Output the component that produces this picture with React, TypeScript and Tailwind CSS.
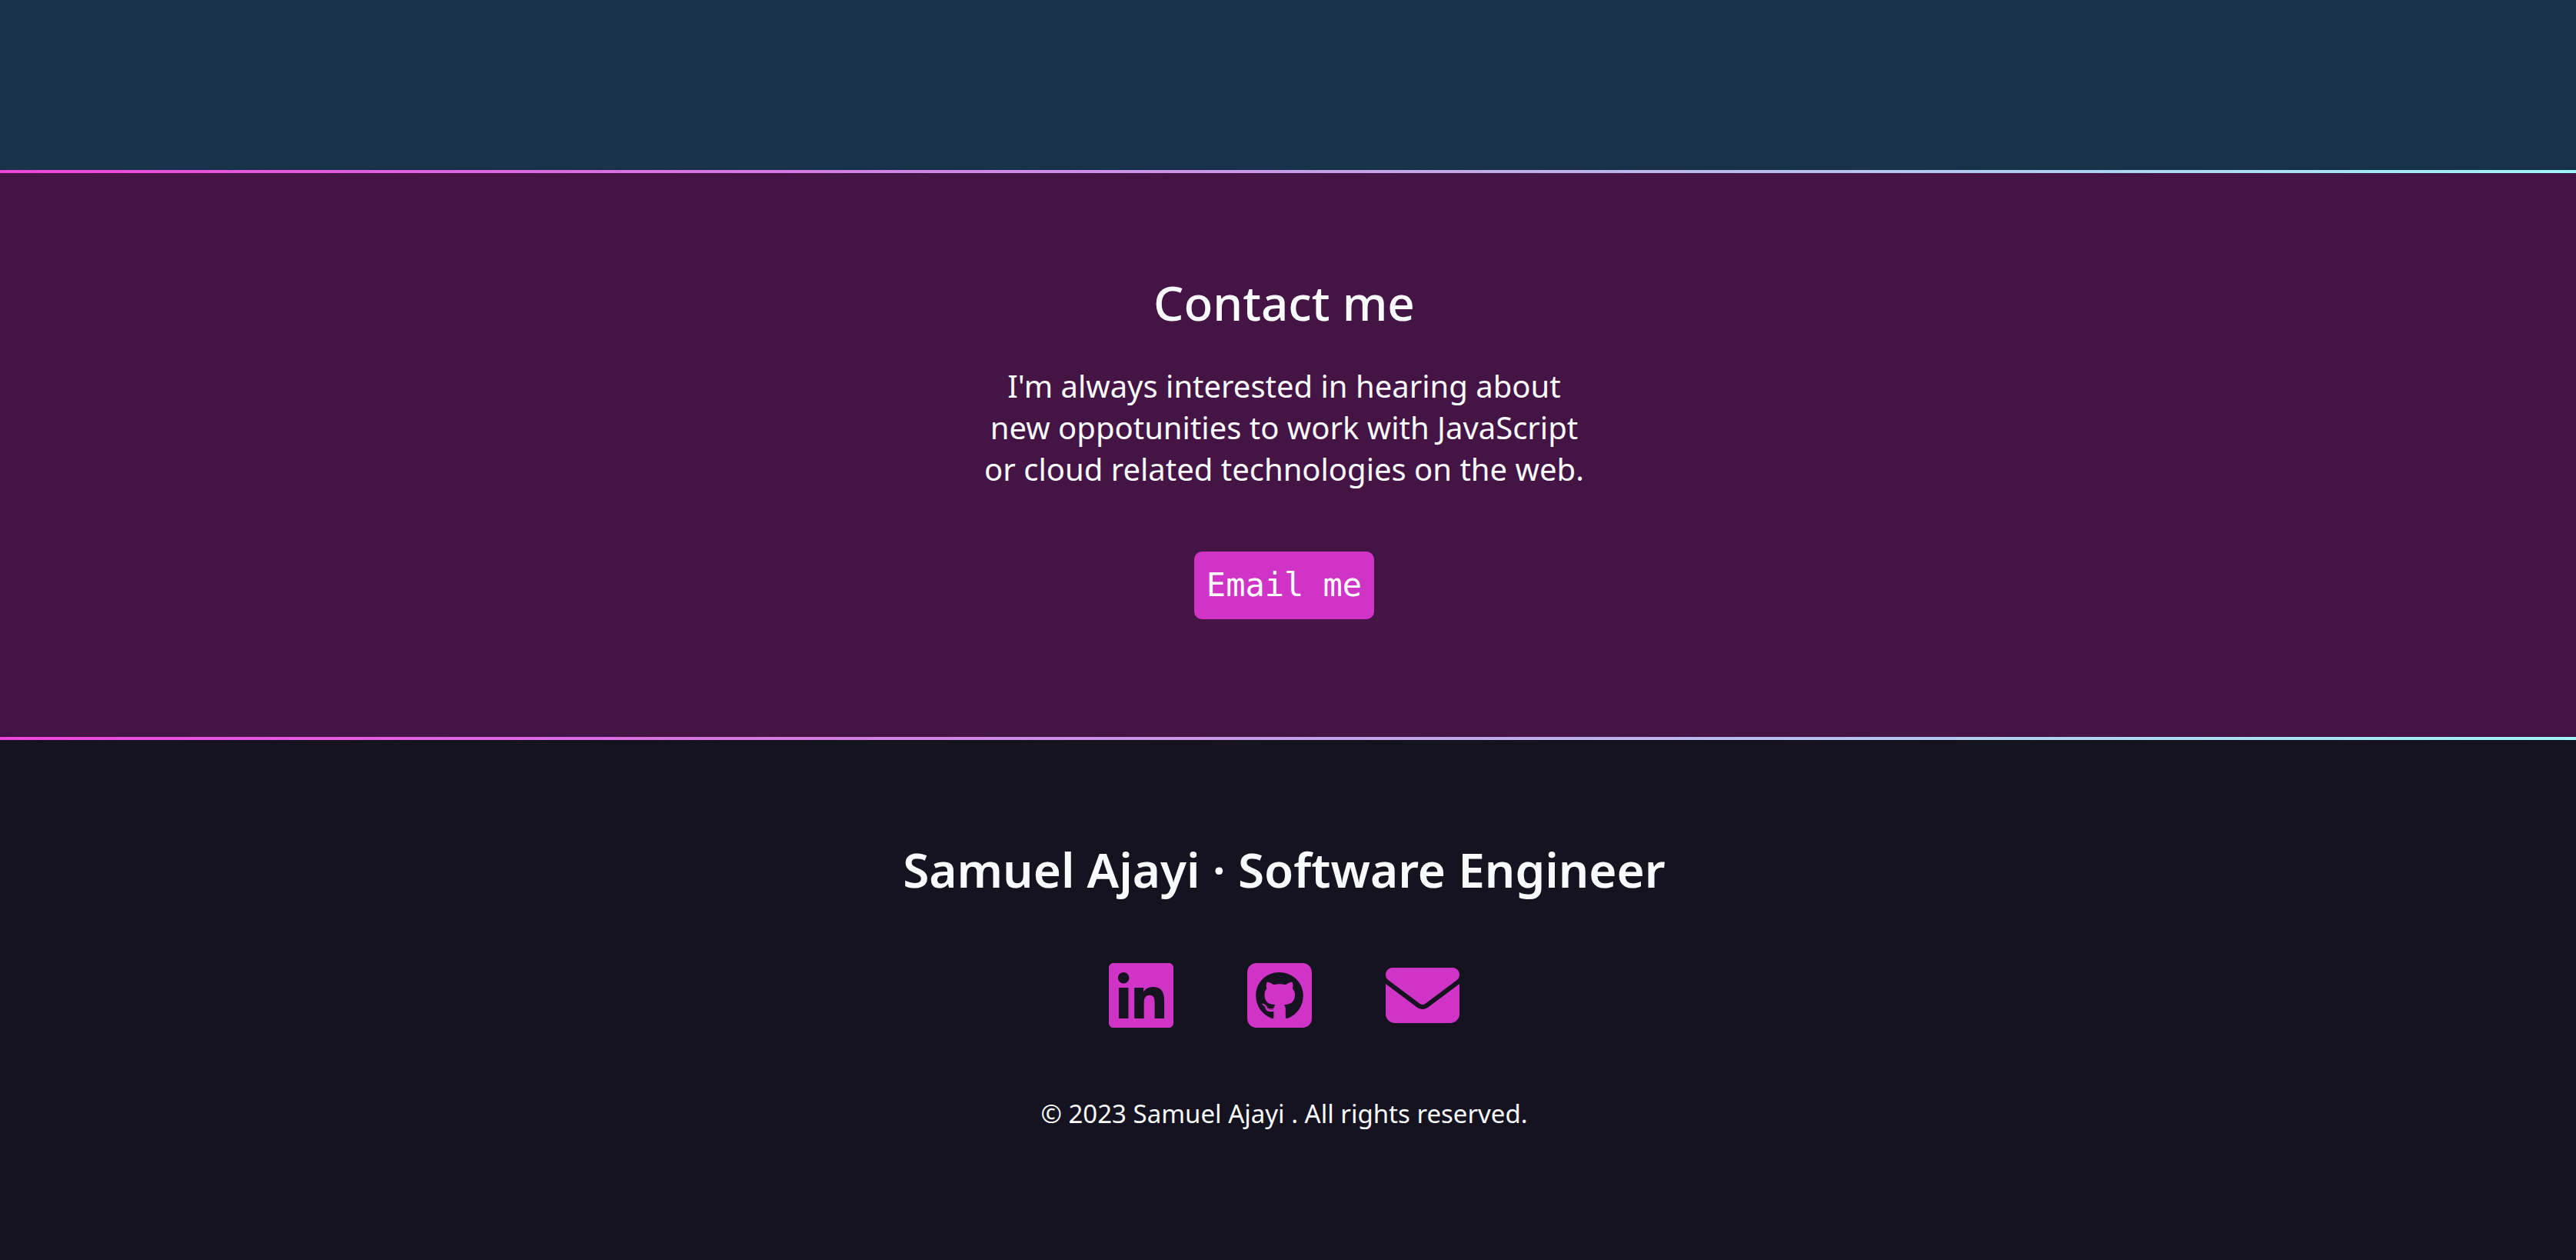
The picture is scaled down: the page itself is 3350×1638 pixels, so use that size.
import { FaEnvelope, FaLinkedin, FaSquareGithub } from "react-icons/fa6";

const socials = [
  { label: "LinkedIn", href: "#linkedin", Icon: FaLinkedin, width: "w-[84px]" },
  { label: "GitHub", href: "#github", Icon: FaSquareGithub, width: "w-[84px]" },
  { label: "Email", href: "#email", Icon: FaEnvelope, width: "w-24" },
];

function Divider() {
  return <div className="h-1 bg-linear-to-r/srgb from-[#ed45dc] to-[#9ff5f8]" />;
}

export default function App() {
  return (
    <div className="flex min-h-screen flex-col bg-[#15131f] font-['Noto_Sans',sans-serif] text-[#f8fafc]">
      <section className="h-[221px] bg-[#18324a]" />
      <Divider />
      <section className="flex flex-col items-center bg-[#441445] pt-[126px] pr-2.5 pb-[153px] text-center">
        <h2 className="text-[62px] leading-[84px] font-medium">Contact me</h2>
        <p className="mt-10 text-[40px] leading-[54px]">
          I'm always interested in hearing about
          <br />
          new oppotunities to work with JavaScript
          <br />
          or cloud related technologies on the web.
        </p>
        <button
          type="button"
          className="mt-20 h-[88px] rounded-[10px] bg-[#cf34c6] px-4 font-['DejaVu_Sans_Mono',monospace] text-[42px] leading-[54px] text-white"
        >
          Email me
        </button>
      </section>
      <Divider />
      <footer className="flex flex-col items-center pt-[126px] pr-2.5 text-center">
        <h2 className="text-[62px] leading-[84px] font-semibold">Samuel Ajayi · Software Engineer</h2>
        <nav aria-label="Social links" className="mt-[74px] flex gap-24">
          {socials.map(({ label, href, Icon, width }) => (
            <a key={label} href={href} aria-label={label} className="text-[#cf34c6]">
              <Icon className={`h-24 ${width}`} />
            </a>
          ))}
        </nav>
        <p className="mt-[82px] text-[33px] leading-[48px]">© 2023 Samuel Ajayi . All rights reserved.</p>
      </footer>
    </div>
  );
}
